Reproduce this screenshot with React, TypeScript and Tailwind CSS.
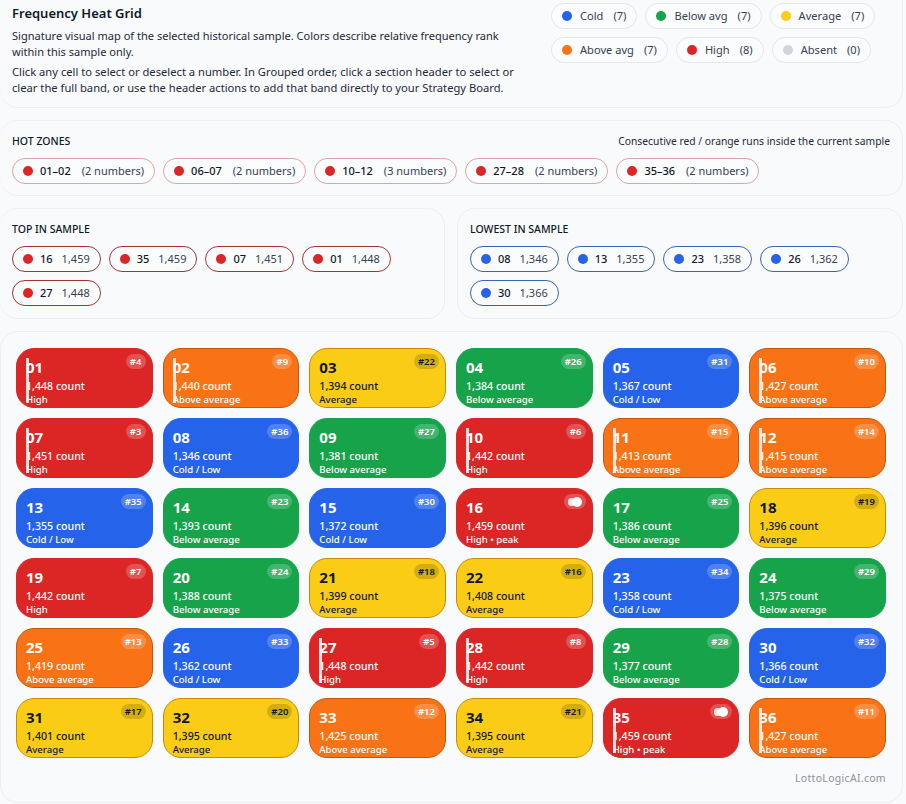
const font = "font-['Noto_Sans','Open_Sans',sans-serif]"

const tones: Record<string, { cell: string; badge: string; label: string }> = {
  cold: { cell: "bg-[#2563eb] border-[#2563eb] text-white", badge: "bg-white/20", label: "Cold / Low" },
  below: { cell: "bg-[#16a34a] border-[#16a34a] text-white", badge: "bg-white/20", label: "Below average" },
  avg: { cell: "bg-[#facc15] border-[#ca8a04] text-[#111827]", badge: "bg-black/15", label: "Average" },
  above: { cell: "bg-[#f97316] border-[#c2570c] text-white", badge: "bg-white/20", label: "Above average" },
  high: { cell: "bg-[#dc2626] border-[#dc2626] text-white", badge: "bg-white/20", label: "High" },
}

// number, count, tone, rank, in a hot zone
const cells: [string, string, string, number, boolean][] = [
  ["01", "1,448", "high", 4, true],
  ["02", "1,440", "above", 9, true],
  ["03", "1,394", "avg", 22, false],
  ["04", "1,384", "below", 26, false],
  ["05", "1,367", "cold", 31, false],
  ["06", "1,427", "above", 10, true],
  ["07", "1,451", "high", 3, true],
  ["08", "1,346", "cold", 36, false],
  ["09", "1,381", "below", 27, false],
  ["10", "1,442", "high", 6, true],
  ["11", "1,413", "above", 15, true],
  ["12", "1,415", "above", 14, true],
  ["13", "1,355", "cold", 35, false],
  ["14", "1,393", "below", 23, false],
  ["15", "1,372", "cold", 30, false],
  ["16", "1,459", "high", 0, false],
  ["17", "1,386", "below", 25, false],
  ["18", "1,396", "avg", 19, false],
  ["19", "1,442", "high", 7, false],
  ["20", "1,388", "below", 24, false],
  ["21", "1,399", "avg", 18, false],
  ["22", "1,408", "avg", 16, false],
  ["23", "1,358", "cold", 34, false],
  ["24", "1,375", "below", 29, false],
  ["25", "1,419", "above", 13, false],
  ["26", "1,362", "cold", 33, false],
  ["27", "1,448", "high", 5, true],
  ["28", "1,442", "high", 8, true],
  ["29", "1,377", "below", 28, false],
  ["30", "1,366", "cold", 32, false],
  ["31", "1,401", "avg", 17, false],
  ["32", "1,395", "avg", 20, false],
  ["33", "1,425", "above", 12, false],
  ["34", "1,395", "avg", 21, false],
  ["35", "1,459", "high", 0, true],
  ["36", "1,427", "above", 11, true],
]

const legend = [
  [
    ["bg-[#2563eb]", "Cold", "(7)"],
    ["bg-[#16a34a]", "Below avg", "(7)"],
    ["bg-[#facc15]", "Average", "(7)"],
  ],
  [
    ["bg-[#f97316]", "Above avg", "(7)"],
    ["bg-[#dc2626]", "High", "(8)"],
    ["bg-[#d1d5db]", "Absent", "(0)"],
  ],
]

function Cell({ n, count, tone, rank, hot }: { n: string; count: string; tone: string; rank: number; hot: boolean }) {
  const t = tones[tone]
  return (
    <div className={`relative h-[60px] rounded-[18px] border px-[9px] overflow-hidden ${t.cell}`}>
      {hot && <span className="absolute left-[9px] top-[9px] h-[45px] w-[3px] bg-white/85" />}
      <span className={`absolute right-[6px] top-[5px] h-[15px] min-w-[20px] rounded-full px-[4px] text-[9.5px] leading-[15px] font-semibold text-center ${t.badge}`}>
        {rank > 0 ? (
          `#${rank}`
        ) : (
          <span className="flex h-full items-center justify-end">
            <span className="h-[8px] w-[7px] rounded-full bg-white/85" />
            <span className="-ml-[3px] h-[10px] w-[10px] rounded-full bg-white" />
          </span>
        )}
      </span>
      <div className="pt-[8px] text-[15px] leading-[20px] font-bold">{n}</div>
      <div className="mt-[1px] text-[10.6px] leading-[16px] font-medium">{count} count</div>
      <div className="text-[9.6px] leading-[12px] font-medium">
        {t.label}
        {n === "16" || n === "35" ? " • peak" : ""}
      </div>
    </div>
  )
}

function Chip({ a, b, border, dot = "bg-[#dc2626]", gap = "gap-[9px]" }: { a: string; b: string; border: string; dot?: string; gap?: string }) {
  return (
    <span className={`inline-flex h-[26px] items-center whitespace-nowrap rounded-full border bg-white/40 px-[10px] text-[11px] ${gap} ${border}`}>
      <span className="flex items-center gap-[7px]">
        <span className={`h-[10px] w-[10px] rounded-full ${dot}`} />
        <span className="font-medium text-[#111827]">{a}</span>
      </span>
      <span className="text-[#374151]">{b}</span>
    </span>
  )
}

export default function App() {
  return (
    <div className={`min-h-[804px] bg-[#f9fafc] pr-[3px] text-[#111827] ${font}`}>
      <div className="flex flex-col gap-[12px]">
        {/* header + legend */}
        <section className="flex h-[108px] justify-between rounded-b-[18px] border border-t-0 border-l-0 border-[#eceff3] bg-[#f8fafc] pl-[12px] pr-[29px]">
          <div className="w-[520px]">
            <h1 className="pt-[4px] text-[13px] leading-[18px] font-semibold">Frequency Heat Grid</h1>
            <p className="mt-[6px] text-[11.05px] leading-[16px] text-[#1f2937]">
              Signature visual map of the selected historical sample. Colors describe relative frequency rank within this sample only.
            </p>
            <p className="mt-[4px] text-[11.2px] leading-[16px] text-[#1f2937]">
              Click any cell to select or deselect a number. In Grouped order, click a section header to select or clear the full band, or use the header actions to add that band directly to your Strategy Board.
            </p>
          </div>
          <div className="flex w-[322px] flex-col gap-[8px] pt-[3px]">
            {legend.map((row, i) => (
              <div key={i} className="flex gap-[8px]">
                {row.map(([dot, name, num]) => (
                  <span key={name} className="inline-flex h-[26px] items-center gap-[8px] whitespace-nowrap rounded-full border border-[#e5e7eb] bg-white/40 px-[10px] text-[11.1px] text-[#374151]">
                    <span className={`h-[10px] w-[10px] rounded-full ${dot}`} />
                    <span className="flex gap-[10px]">
                      <span>{name}</span>
                      <span>{num}</span>
                    </span>
                  </span>
                ))}
              </div>
            ))}
          </div>
        </section>

        {/* hot zones */}
        <section className="h-[76px] rounded-[18px] border border-l-0 border-[#eceff3] bg-[#f8fafc] pl-[12px] pr-[12px] pt-[12px]">
          <div className="flex items-center justify-between">
            <h2 className="text-[10.5px] leading-[16px] font-medium">HOT ZONES</h2>
            <span className="text-[10.3px] leading-[16px] text-[#1f2937]">Consecutive red / orange runs inside the current sample</span>
          </div>
          <div className="mt-[9px] flex gap-[8px]">
            {["01–02|2", "06–07|2", "10–12|3", "27–28|2", "35–36|2"].map((z) => {
              const [range, c] = z.split("|")
              return <Chip key={range} a={range} b={`(${c} numbers)`} border="border-[#dba5a5]" gap="gap-[11px]" />
            })}
          </div>
        </section>

        {/* top and lowest */}
        <div className="grid grid-cols-[445px_1fr] gap-[12px]">
          <section className="h-[111px] rounded-[18px] border border-l-0 border-[#eceff3] bg-[#f8fafc] pl-[12px] pr-[12px] pt-[12px]">
            <h2 className="text-[10.5px] leading-[16px] font-medium">TOP IN SAMPLE</h2>
            <div className="mt-[9px] flex flex-wrap gap-[8px]">
              {[["16", "1,459"], ["35", "1,459"], ["07", "1,451"], ["01", "1,448"], ["27", "1,448"]].map(([a, b]) => (
                <Chip key={a} a={a} b={b} border="border-[#a83232]" />
              ))}
            </div>
          </section>
          <section className="h-[111px] rounded-[18px] border border-[#eceff3] bg-[#f8fafc] pl-[12px] pr-[12px] pt-[12px]">
            <h2 className="text-[10.5px] leading-[16px] font-medium">LOWEST IN SAMPLE</h2>
            <div className="mt-[9px] flex flex-wrap gap-[8px]">
              {[["08", "1,346"], ["13", "1,355"], ["23", "1,358"], ["26", "1,362"], ["30", "1,366"]].map(([a, b]) => (
                <Chip key={a} a={a} b={b} border="border-[#3a62b8]" dot="bg-[#2563eb]" />
              ))}
            </div>
          </section>
        </div>

        {/* the grid */}
        <section className="h-[472px] rounded-[18px] border border-[#eceff3] bg-[#f8fafc] pl-[15px] pr-[16px] pt-[16px]">
          <div className="grid grid-cols-6 gap-[10px]">
            {cells.map(([n, count, tone, rank, hot]) => (
              <Cell key={n} n={n} count={count} tone={tone} rank={rank} hot={hot} />
            ))}
          </div>
          <div className="mt-[12px] text-right text-[10.5px] leading-[16px] tracking-[0.3px] text-[#8b939f]">LottoLogicAI.com</div>
        </section>
      </div>
    </div>
  )
}
